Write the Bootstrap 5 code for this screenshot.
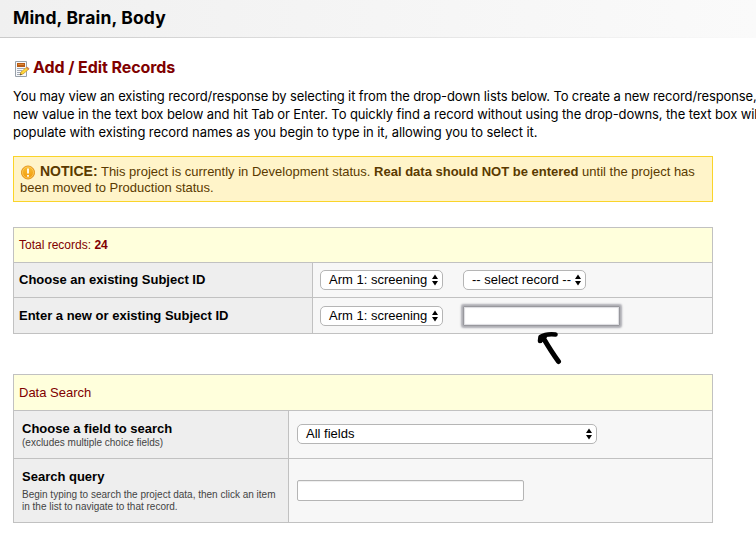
<!DOCTYPE html>
<html lang="en">
<head>
<meta charset="utf-8">
<meta name="viewport" content="width=device-width, initial-scale=1">
<title>Add / Edit Records</title>
<link href="https://cdn.jsdelivr.net/npm/bootstrap@5.3.0/dist/css/bootstrap.min.css" rel="stylesheet">
<style>
body{font-family:"Liberation Sans",Arial,sans-serif;font-size:13px;line-height:16px;color:#000;background:#fff}
.page-frame{width:756px;height:553px}
.app-title{height:38px;padding:0 13px;background:linear-gradient(90deg,#f0f0f0,#fafafa);border-bottom:1px solid;border-image:linear-gradient(90deg,#cacaca,#fafafa) 1}
.app-title h1{font:700 17.5px/36px Inter,sans-serif;letter-spacing:.16px;margin:0}
.content-area{padding-left:13px}
.page-heading{height:20px;margin-top:19px;font:700 16px/20px Inter,sans-serif;color:#800000;letter-spacing:-.08px}
.page-heading svg{margin:4px 3px 0 1px}
.intro{margin-top:10px;font:400 13px/18px Inter,sans-serif;height:54px;letter-spacing:-.122px}
.intro span{display:block}
.intro .middle-line{letter-spacing:-.1px}
.intro .last-line{letter-spacing:-.08px}
.notice-box{width:700px;height:46px;margin-top:15px;padding:6px;border:1px solid #fad42a;background:#fff4c9;color:#5a3a00}
.notice-box svg{margin:0 4px 0 1px;vertical-align:-4px}
.notice-box .tag{font-size:14px}
.notice-box span{display:block}
.panel{width:700px;border:1px solid #c1c1c1;background:#f7f7f7}
.first-panel{margin-top:25px}
.second-panel{margin-top:40px}
.panel-top{background:#ffffdc;color:#800000;padding-left:5px}
.first-panel .panel-top{font-size:12px;height:34px}
.second-panel .panel-top{height:35px}
.line{border-top:1px solid #c1c1c1}
.line-a{height:35px}
.line-b{height:36px}
.line-c{height:48px}
.line-d{height:64px}
.label-cell{background:#eee;border-right:1px solid #c1c1c1;font-weight:700}
.first-panel .label-cell{width:299px;padding-left:5px}
.second-panel .label-cell{width:275px;padding:10px 0 0 8px}
.controls{padding-left:7px;gap:20px}
.second-panel .controls{padding-left:8px}
.hint{font-size:10px;line-height:12px;font-weight:400;color:#444}
.picker{height:20px;border:1px solid #b5b5b5;border-radius:5px;background:#fff;padding:0 4px 0 8px;line-height:18px}
.picker svg{width:6px;height:12px}
.w-arm{width:123px}
.w-fields{width:300px;margin-bottom:2px}
.entry{border:1px solid #b5b5b5;border-radius:2px;background:#fff;box-shadow:inset 0 1px 1px #eee;padding:0}
.w-query{width:227px;height:21px}
.glow{width:157px;height:20px;border:1px solid #98989d;border-radius:1px;box-shadow:0 0 2px 1.5px #adadb3,inset 0 0 1px 1px #dcdce0}
.arrow-note{left:522px;top:103px}
</style>
<script src="https://cdn.jsdelivr.net/npm/bootstrap@5.3.0/dist/js/bootstrap.bundle.min.js"></script>
</head>
<body>
<svg width="0" height="0" class="position-absolute"><symbol id="updown" viewBox="0 0 6 12"><path d="M3 .5 6 5H0zM0 7h6l-3 4.500z"/></symbol></svg>
<div class="page-frame overflow-hidden">
<header class="app-title"><h1>Mind, Brain, Body</h1></header>
<main class="content-area">
<h2 class="page-heading d-flex align-items-center mb-0">
<svg width="16" height="17" viewBox="0 0 16 17"><path d="M1.500.5h11v15h-11z" fill="#f8f9fb" stroke="#98a1aa"/><path d="M3 2h8v4H3z" fill="#b85c16"/><path d="M4 3h6v1H4z" fill="#df8a38"/><path d="M3 7.500h8M3 9.500h5M3 11.500h4M3 13.500h3" stroke="#a3aab5"/><path d="m6 14 1-3 6-5 2 2-6 5z" fill="#ffd83a" stroke="#c48b22" stroke-width=".7"/><path d="m12 7 1.500-1.300 2 2L14 9z" fill="#d88b55"/><path d="m6 14.200.7-1.800 1.200 1.200z" fill="#333"/></svg>
<span>Add / Edit Records</span></h2>
<p class="intro mb-0 text-nowrap"><span>You may view an existing record/response by selecting it from the drop-down lists below. To create a new record/response,</span><span class="middle-line">new value in the text box below and hit Tab or Enter. To quickly find a record without using the drop-downs, the text box will</span><span class="last-line">populate with existing record names as you begin to type in it, allowing you to select it.</span></p>
<div class="notice-box text-nowrap"><span><svg width="15" height="15" viewBox="0 0 15 15"><defs><linearGradient id="amber" x2="0" y2="1"><stop stop-color="#f7bc32"/><stop offset="1" stop-color="#f29a0b"/></linearGradient></defs><circle cx="7" cy="7.500" r="6.500" fill="url(#amber)" stroke="#e39219"/><circle cx="7" cy="7.500" r="5.500" fill="none" stroke="#ffd36a" stroke-width=".7"/><path d="M7 3.500v5M7 10v1.700" stroke="#fff" stroke-width="1.800"/></svg><b class="tag">NOTICE:</b> This project is currently in Development status. <b>Real data should NOT be entered</b> until the project has</span><span>been moved to Production status.</span></div>

<section class="panel first-panel position-relative">
<div class="panel-top d-flex align-items-center"><span>Total records: <b>24</b></span></div>
<div class="line line-a d-flex"><div class="label-cell d-flex align-items-center">Choose an existing Subject ID</div>
<div class="controls d-flex align-items-center"><div class="picker w-arm d-flex justify-content-between align-items-center"><span>Arm 1: screening</span><svg><use href="#updown"/></svg></div><div class="picker w-arm d-flex justify-content-between align-items-center"><span>-- select record --</span><svg><use href="#updown"/></svg></div></div></div>
<div class="line line-b d-flex"><div class="label-cell d-flex align-items-center">Enter a new or existing Subject ID</div>
<div class="controls d-flex align-items-center"><div class="picker w-arm d-flex justify-content-between align-items-center"><span>Arm 1: screening</span><svg><use href="#updown"/></svg></div><input class="entry glow" aria-label="Subject ID"></div></div>
<svg class="arrow-note position-absolute" width="28" height="36" viewBox="0 0 28 36" fill="none" stroke="#000" stroke-linecap="round" stroke-linejoin="round"><path d="M22.500 30.500C17 23 12 15 7 6.500" stroke-width="5"/><path d="M4 10 4.500 6Q10 2.500 19.500 3.500" stroke-width="4.600"/><path d="M4 6h6l-5 5z" fill="#000" stroke-width="2"/></svg>
</section>

<section class="panel second-panel">
<div class="panel-top d-flex align-items-center">Data Search</div>
<div class="line line-c d-flex"><div class="label-cell">Choose a field to search<div class="hint">(excludes multiple choice fields)</div></div>
<div class="controls d-flex align-items-center"><div class="picker w-fields d-flex justify-content-between align-items-center"><span>All fields</span><svg><use href="#updown"/></svg></div></div></div>
<div class="line line-d d-flex"><div class="label-cell text-nowrap">Search query<div class="hint mt-1">Begin typing to search the project data, then click an item<br>in the list to navigate to that record.</div></div>
<div class="controls d-flex align-items-center"><input class="entry w-query" aria-label="Search query"></div></div>
</section>
</main>
</div>
</body>
</html>
